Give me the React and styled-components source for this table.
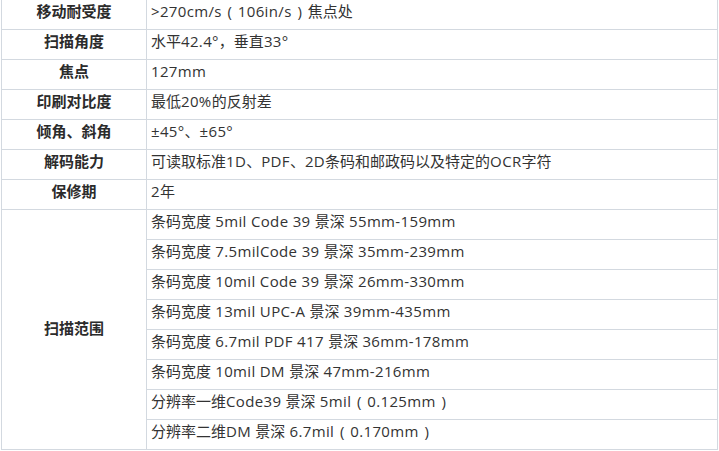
import React from "react";
import styled, { createGlobalStyle } from "styled-components";

const Global = createGlobalStyle`
  html, body { margin: 0; padding: 0; background: #fff; }
  body { font-family: "Open Sans", "Noto Sans CJK SC", sans-serif; }
`;

const Wrap = styled.div`
  width: 719px;
  height: 451px;
  overflow: hidden;
  padding-left: 1px;
  box-sizing: border-box;
`;

const Table = styled.table`
  border-collapse: collapse;
  width: 717px;
  margin-top: -1px;
  table-layout: fixed;
  color: #333;
  font-size: 15px;
`;

const Label = styled.th`
  width: 145px;
  border: 1px solid #d3d9e0;
  font-weight: bold;
  text-align: center;
  vertical-align: middle;
  height: 30px;
  padding: 0 4px ${(p) => (p.$tall ? "4px" : "7px")};
  box-sizing: border-box;
  line-height: 22px;
  color: #2b2b2b;
`;

const Value = styled.td`
  border: 1px solid #d3d9e0;
  text-align: left;
  height: 30px;
  padding: 0 4px 7px 4px;
  box-sizing: border-box;
  line-height: 22px;
  white-space: nowrap;
`;

const Latin = styled.span`
  letter-spacing: 0.35px;
`;

const Paren = styled.span`
  display: inline-block;
  width: 16px;
  text-align: center;
`;

const renderText = (s) =>
  s.split(/([（）]|[A-Za-z0-9.%\-\/>±° ]+)/).filter(Boolean).map((part, i) => {
    if (part === "（") return <Paren key={i}>(</Paren>;
    if (part === "）") return <Paren key={i}>)</Paren>;
    if (/^[A-Za-z0-9.%\-\/>±° ]+$/.test(part)) return <Latin key={i}>{part}</Latin>;
    return <React.Fragment key={i}>{part}</React.Fragment>;
  });

const rows = [
  ["移动耐受度", ">270cm/s（106in/s）焦点处"],
  ["扫描角度", "水平42.4°，垂直33°"],
  ["焦点", "127mm"],
  ["印刷对比度", "最低20%的反射差"],
  ["倾角、斜角", "±45°、±65°"],
  ["解码能力", "可读取标准1D、PDF、2D条码和邮政码以及特定的OCR字符"],
  ["保修期", "2年"],
];

const range = [
  "条码宽度 5mil Code 39 景深 55mm-159mm",
  "条码宽度 7.5milCode 39 景深 35mm-239mm",
  "条码宽度 10mil Code 39 景深 26mm-330mm",
  "条码宽度 13mil UPC-A 景深 39mm-435mm",
  "条码宽度 6.7mil PDF 417 景深 36mm-178mm",
  "条码宽度 10mil DM 景深 47mm-216mm",
  "分辨率一维Code39 景深 5mil（0.125mm）",
  "分辨率二维DM 景深 6.7mil（0.170mm）",
];

export default function App() {
  return (
    <Wrap>
      <Global />
      <Table>
        <tbody>
          {rows.map(([l, v]) => (
            <tr key={l}>
              <Label>{l}</Label>
              <Value>{renderText(v)}</Value>
            </tr>
          ))}
          {range.map((v, i) => (
            <tr key={v}>
              {i === 0 && (
                <Label rowSpan={range.length} $tall>
                  扫描范围
                </Label>
              )}
              <Value>{renderText(v)}</Value>
            </tr>
          ))}
        </tbody>
      </Table>
    </Wrap>
  );
}
